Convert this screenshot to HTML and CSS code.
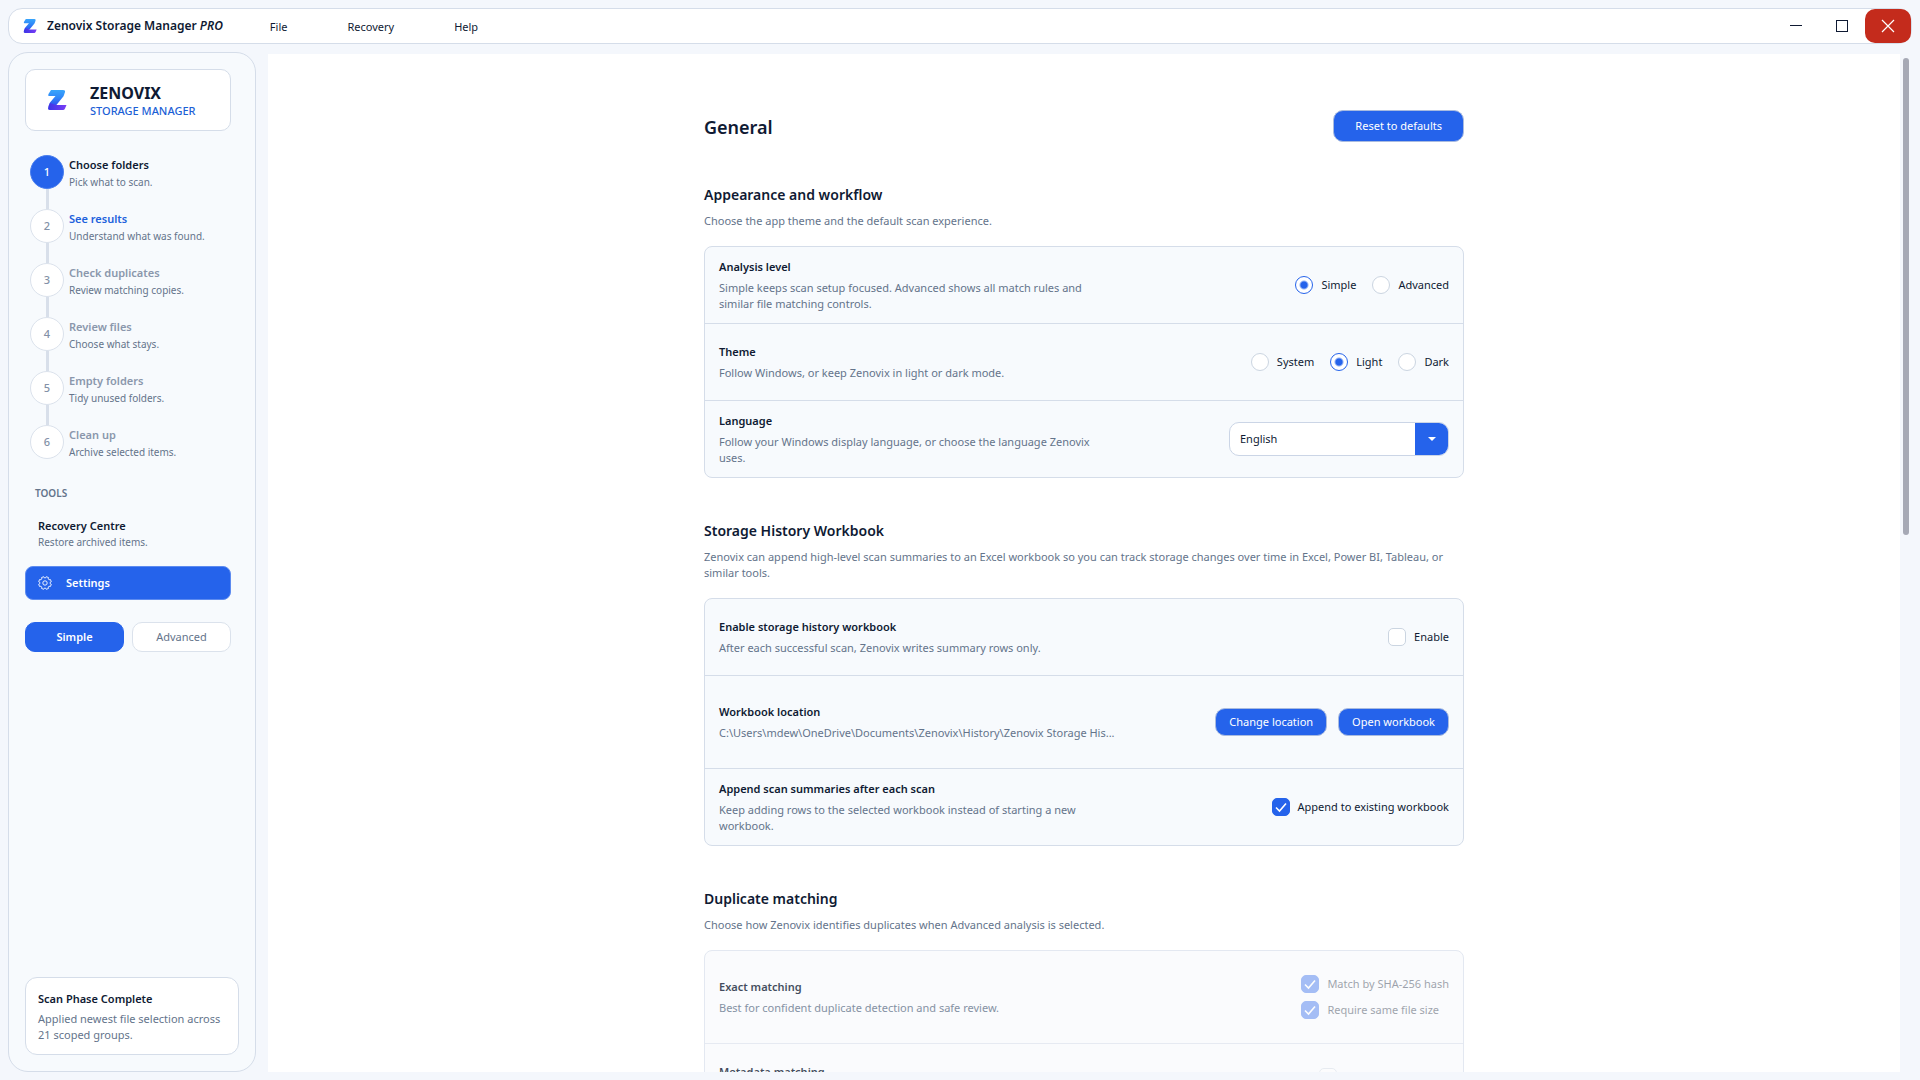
FILE: index.html
```html
<!DOCTYPE html>
<html lang="en">
<head>
<meta charset="utf-8">
<meta name="viewport" content="width=device-width, initial-scale=1">
<title>Zenovix Storage Manager PRO</title>
<link rel="stylesheet" href="styles.css">
</head>
<body>
<svg class="defs" width="0" height="0" aria-hidden="true">
  <defs>
    <linearGradient id="z-top" x1="0" y1="0" x2="0" y2="1">
      <stop offset="0" stop-color="#38a5fb"/>
      <stop offset="0.5" stop-color="#2f86f8"/>
      <stop offset="1" stop-color="#2f4ff0"/>
    </linearGradient>
    <linearGradient id="z-base" x1="0" y1="0" x2="1" y2="0">
      <stop offset="0" stop-color="#3a35e6"/>
      <stop offset="1" stop-color="#7a3cf5"/>
    </linearGradient>
    <symbol id="z-logo" viewBox="0 0 20 20">
      <path d="M4 0H16Q18.500 0 18 2L17 5Q16.500 6.500 15.500 7.500L9 15.500H3Q1.500 14.500 3 12.500L8.500 6H2Q0.500 6 1.500 4Z" fill="url(#z-top)"/>
      <path d="M3 13L9 15H19.500L18 18.500Q17.300 20 16 20H3Q1 20 1 18.500Q1 16 3 13Z" fill="url(#z-base)"/>
    </symbol>
  </defs>
</svg>
<div class="app">
  <header class="titlebar">
    <svg class="titlebar-logo" aria-hidden="true"><use href="#z-logo"/></svg>
    <div class="titlebar-name">Zenovix Storage Manager <em>PRO</em></div>
    <nav class="menu" aria-label="Main menu">
      <button class="menu-item" type="button">File</button>
      <button class="menu-item" type="button">Recovery</button>
      <button class="menu-item" type="button">Help</button>
    </nav>
    <div class="window-buttons">
      <button class="window-button" type="button" aria-label="Minimise">
        <svg width="14" height="14" viewBox="0 0 14 14"><path d="M1 6.500H13" stroke="currentColor"/></svg>
      </button>
      <button class="window-button" type="button" aria-label="Maximise">
        <svg width="14" height="14" viewBox="0 0 14 14"><rect x="1.500" y="1.500" width="11" height="11" fill="none" stroke="currentColor"/></svg>
      </button>
      <button class="window-button close" type="button" aria-label="Close">
        <svg width="14" height="14" viewBox="0 0 14 14"><path d="M1 1L13 13M13 1L1 13" stroke="currentColor" stroke-width="1.200"/></svg>
      </button>
    </div>
  </header>

  <div class="body">
    <aside class="sidebar">
      <div class="brand">
        <svg class="brand-logo" aria-hidden="true"><use href="#z-logo"/></svg>
        <div class="brand-text">
          <div class="brand-name">ZENOVIX</div>
          <div class="brand-sub">STORAGE MANAGER</div>
        </div>
      </div>

      <ol class="steps">
        <li class="step active"><span class="step-dot">1</span><div class="step-text"><div class="step-title">Choose folders</div><div class="step-sub">Pick what to scan.</div></div></li>
        <li class="step next"><span class="step-dot">2</span><div class="step-text"><div class="step-title">See results</div><div class="step-sub">Understand what was found.</div></div></li>
        <li class="step"><span class="step-dot">3</span><div class="step-text"><div class="step-title">Check duplicates</div><div class="step-sub">Review matching copies.</div></div></li>
        <li class="step"><span class="step-dot">4</span><div class="step-text"><div class="step-title">Review files</div><div class="step-sub">Choose what stays.</div></div></li>
        <li class="step"><span class="step-dot">5</span><div class="step-text"><div class="step-title">Empty folders</div><div class="step-sub">Tidy unused folders.</div></div></li>
        <li class="step"><span class="step-dot">6</span><div class="step-text"><div class="step-title">Clean up</div><div class="step-sub">Archive selected items.</div></div></li>
      </ol>

      <div class="tools-label">TOOLS</div>
      <a class="tool" href="#recovery">
        <span class="tool-title">Recovery Centre</span>
        <span class="tool-sub">Restore archived items.</span>
      </a>
      <a class="tool-current" href="#settings" aria-current="page">
        <svg width="14" height="14" viewBox="0 0 14 14" fill="none" stroke="currentColor" stroke-width="0.900" aria-hidden="true">
          <path d="M5.700 0.700L6.300 1.800H7.700L8.300 0.700L10.500 1.600L10.200 2.900L11.100 3.800L12.400 3.500L13.300 5.700L12.200 6.300V7.700L13.300 8.300L12.400 10.500L11.100 10.200L10.200 11.100L10.500 12.400L8.300 13.300L7.700 12.200H6.300L5.700 13.300L3.500 12.400L3.800 11.100L2.900 10.200L1.600 10.500L0.700 8.300L1.800 7.700V6.300L0.700 5.700L1.600 3.500L2.900 3.800L3.800 2.900L3.500 1.600Z" stroke-linejoin="round"/>
          <circle cx="7" cy="7" r="2.200"/>
        </svg>
        <span>Settings</span>
      </a>
      <div class="mode">
        <button class="mode-button selected" type="button" aria-pressed="true">Simple</button>
        <button class="mode-button" type="button" aria-pressed="false">Advanced</button>
      </div>

      <div class="status">
        <div class="status-title">Scan Phase Complete</div>
        <p class="status-text">Applied newest file selection across 21 scoped groups.</p>
      </div>
    </aside>

    <main class="page">
      <div class="content">
        <div class="page-head">
          <h1>General</h1>
          <button class="button reset" type="button">Reset to defaults</button>
        </div>

        <section class="section">
          <h2>Appearance and workflow</h2>
          <p class="muted">Choose the app theme and the default scan experience.</p>
          <div class="card">
            <div class="row">
              <div class="copy">
                <h3>Analysis level</h3>
                <p class="muted">Simple keeps scan setup focused. Advanced shows all match rules and similar file matching controls.</p>
              </div>
              <div class="controls">
                <label class="choice"><input type="radio" name="level" checked>Simple</label>
                <label class="choice"><input type="radio" name="level">Advanced</label>
              </div>
            </div>
            <div class="row">
              <div class="copy">
                <h3>Theme</h3>
                <p class="muted">Follow Windows, or keep Zenovix in light or dark mode.</p>
              </div>
              <div class="controls">
                <label class="choice"><input type="radio" name="theme">System</label>
                <label class="choice"><input type="radio" name="theme" checked>Light</label>
                <label class="choice"><input type="radio" name="theme">Dark</label>
              </div>
            </div>
            <div class="row">
              <div class="copy">
                <h3><label for="language">Language</label></h3>
                <p class="muted">Follow your Windows display language, or choose the language Zenovix uses.</p>
              </div>
              <div class="select">
                <select id="language"><option>English</option></select>
                <span class="select-arrow" aria-hidden="true"><svg width="8" height="4" viewBox="0 0 8 4"><path d="M0 0H8L4 4Z" fill="#fff"/></svg></span>
              </div>
            </div>
          </div>
        </section>

        <section class="section">
          <h2>Storage History Workbook</h2>
          <p class="muted">Zenovix can append high-level scan summaries to an Excel workbook so you can track storage changes over time in Excel, Power BI, Tableau, or similar tools.</p>
          <div class="card">
            <div class="row">
              <div class="copy">
                <h3>Enable storage history workbook</h3>
                <p class="muted">After each successful scan, Zenovix writes summary rows only.</p>
              </div>
              <div class="controls">
                <label class="choice"><input type="checkbox">Enable</label>
              </div>
            </div>
            <div class="row tall">
              <div class="copy">
                <h3>Workbook location</h3>
                <p class="muted path">C:\Users\mdew\OneDrive\Documents\Zenovix\History\Zenovix Storage His...</p>
              </div>
              <div class="controls actions">
                <button class="button" type="button">Change location</button>
                <button class="button" type="button">Open workbook</button>
              </div>
            </div>
            <div class="row">
              <div class="copy">
                <h3>Append scan summaries after each scan</h3>
                <p class="muted">Keep adding rows to the selected workbook instead of starting a new workbook.</p>
              </div>
              <div class="controls">
                <label class="choice"><input type="checkbox" checked>Append to existing workbook</label>
              </div>
            </div>
          </div>
        </section>

        <section class="section">
          <h2>Duplicate matching</h2>
          <p class="muted">Choose how Zenovix identifies duplicates when Advanced analysis is selected.</p>
          <div class="card disabled">
            <div class="row tall">
              <div class="copy">
                <h3>Exact matching</h3>
                <p class="muted">Best for confident duplicate detection and safe review.</p>
              </div>
              <div class="controls stacked">
                <label class="choice"><input type="checkbox" checked disabled>Match by SHA-256 hash</label>
                <label class="choice"><input type="checkbox" checked disabled>Require same file size</label>
              </div>
            </div>
            <div class="row">
              <div class="copy">
                <h3>Metadata matching</h3>
              </div>
              <div class="controls metadata">
                <input type="checkbox" aria-label="Metadata matching" disabled>
              </div>
            </div>
          </div>
        </section>
      </div>
    </main>
    <div class="scrollbar" aria-hidden="true"><div class="scrollbar-thumb"></div></div>
  </div>
</div>
</body>
</html>
```
FILE: styles.css
```css
:root {
  --ink: #0f1a33;
  --muted: #64748b;
  --line: #d5dde9;
  --blue: #2563eb;
  --panel: #f7fafd;
}

* { box-sizing: border-box; }

body {
  margin: 0;
  background: #f4f7fc;
  color: var(--ink);
  font: 11px/16px "Noto Sans", "Open Sans", sans-serif;
}

h1, h2, h3, p, ol { margin: 0; padding: 0; font-weight: 400; }
button, select { font: inherit; color: inherit; }
.defs { position: absolute; }

.app {
  display: flex;
  flex-direction: column;
  gap: 8px;
  height: 100vh;
  padding: 8px;
}

/* Title bar */
.titlebar {
  display: flex;
  align-items: center;
  flex: none;
  height: 36px;
  padding-left: 14px;
  background: #fff;
  border: 1px solid var(--line);
  border-radius: 14px;
}
.titlebar-logo { width: 14px; height: 14px; }
.titlebar-name { margin-left: 10px; font-size: 12px; font-weight: 600; }
.menu { display: flex; gap: 40px; margin-left: 37px; }
.menu-item { padding: 5px 10px 3px; border: 0; background: none; }
.window-buttons { display: flex; height: 100%; margin-left: auto; }
.window-button {
  display: grid;
  place-items: center;
  width: 46px;
  padding: 0;
  border: 0;
  border-radius: 10px;
  background: none;
}
.window-button.close { background: #c42b1c; color: #fff; }

.body {
  display: grid;
  grid-template-columns: 248px minmax(0, 1fr) 12px;
  flex: 1;
  min-height: 0;
}

/* Sidebar */
.sidebar {
  display: flex;
  flex-direction: column;
  padding: 16px;
  background: var(--panel);
  border: 1px solid var(--line);
  border-radius: 20px;
}
.brand {
  display: flex;
  align-items: center;
  gap: 23px;
  height: 62px;
  margin-right: 8px;
  padding-left: 21px;
  background: #fff;
  border: 1px solid var(--line);
  border-radius: 10px;
}
.brand-logo { width: 20px; height: 20px; }
.brand-text { padding-top: 2px; }
.brand-name { font-size: 16px; line-height: 20px; font-weight: 700; }
.brand-sub { color: #1d5fd6; font-weight: 500; }

.steps { margin-top: 24px; list-style: none; }
.step {
  position: relative;
  display: flex;
  align-items: center;
  gap: 5px;
  height: 54px;
  padding: 0 0 20px 5px;
}
.step:last-child { height: 34px; padding-bottom: 0; }
.step:not(:last-child)::after {
  content: "";
  position: absolute;
  top: 34px;
  left: 21px;
  width: 3px;
  height: 20px;
  background: #d8dfea;
}
.step-dot {
  display: grid;
  place-items: center;
  width: 34px;
  height: 34px;
  border: 1px solid #dbe2ec;
  border-radius: 50%;
  background: #fff;
  color: #8391a7;
  font-weight: 500;
}
.step-text { padding-top: 2px; }
.step-title { line-height: 18px; font-weight: 600; color: #8a97ac; }
.step-sub, .tool-sub { font-size: 10px; color: var(--muted); }
.step.active .step-dot { background: var(--blue); border-color: #4b7fee; color: #fff; }
.step.active .step-title { color: var(--ink); }
.step.next .step-title { color: #2161dc; }

.tools-label { margin: 26px 0 0 10px; color: var(--muted); font-size: 10px; font-weight: 600; }
.tool {
  display: flex;
  flex-direction: column;
  margin: 17px 0 0 13px;
  color: inherit;
  text-decoration: none;
}
.tool-title { font-weight: 600; }
.tool-current {
  display: flex;
  align-items: center;
  gap: 14px;
  height: 34px;
  margin: 16px 8px 0 0;
  padding-left: 12px;
  border: 1px solid #5d8bf0;
  border-radius: 8px;
  background: var(--blue);
  color: #fff;
  font-weight: 600;
  text-decoration: none;
}
.mode { display: flex; gap: 8px; margin: 22px 8px 0 0; }
.mode-button {
  flex: 1;
  height: 30px;
  padding: 0;
  border: 1px solid #dbe2ec;
  border-radius: 10px;
  background: #fff;
  color: var(--muted);
}
.mode-button.selected {
  background: var(--blue);
  border-color: var(--blue);
  color: #fff;
  font-weight: 600;
}
.status {
  margin-top: auto;
  padding: 13px 12px 11px;
  background: #fff;
  border: 1px solid var(--line);
  border-radius: 12px;
}
.status-title { font-weight: 600; }
.status-text { margin-top: 4px; color: var(--muted); }

/* Settings page */
.page {
  margin: 2px 0 0 12px;
  background: #fff;
  overflow: hidden;
}
.content { width: 100%; max-width: 760px; margin: 0 auto; padding-top: 56px; }
.page-head { display: flex; align-items: center; justify-content: space-between; height: 32px; }
h1 { padding-top: 2px; font-size: 18px; line-height: 24px; font-weight: 600; }
h2 { font-size: 14px; line-height: 22px; font-weight: 600; }
h3 { font-size: 11px; line-height: 16px; font-weight: 600; }
.muted { color: var(--muted); }
.section { margin-top: 42px; }
.section > .muted { margin-top: 7px; }

.card {
  margin-top: 17px;
  background: var(--panel);
  border: 1px solid var(--line);
  border-radius: 8px;
}
.row {
  display: flex;
  align-items: center;
  justify-content: space-between;
  min-height: 77px;
  padding: 11px 14px;
  border-bottom: 1px solid var(--line);
}
.row.tall { min-height: 93px; }
.row:last-child { min-height: 76px; border-bottom: 0; }
.copy { max-width: 408px; min-height: 37px; }
.copy .muted { max-width: 400px; margin-top: 5px; }
.copy .path { max-width: none; white-space: nowrap; }

.controls { display: flex; gap: 16px; }
.controls.actions { gap: 11px; }
.controls.stacked { flex-direction: column; gap: 8px; }
.controls.metadata { width: 130px; height: 28px; }
.choice { display: flex; align-items: center; gap: 8px; height: 18px; }

input[type="radio"], input[type="checkbox"] {
  flex: none;
  appearance: none;
  width: 18px;
  height: 18px;
  margin: 0;
  border: 1px solid #cbd5e1;
  background: #fff;
}
input[type="radio"] { border-radius: 50%; }
input[type="radio"]:checked {
  border-color: var(--blue);
  background: radial-gradient(circle, var(--blue) 3px, #fff 5px);
}
input[type="checkbox"] { border-radius: 5px; }
input[type="checkbox"]:checked {
  border-color: var(--blue);
  background: var(--blue) url("data:image/svg+xml,%3Csvg xmlns='http://www.w3.org/2000/svg' viewBox='0 0 16 16'%3E%3Cpath d='M3 8.500L6.500 12L13 4.500' fill='none' stroke='%23fff' stroke-width='1.600'/%3E%3C/svg%3E");
}

.button {
  height: 28px;
  padding: 0 14px;
  border: 1px solid #a9bbdf;
  border-radius: 10px;
  background: var(--blue);
  color: #fff;
}
.actions .button { padding: 0 13px; }
.button.reset { height: 32px; padding: 0 21px; }

.select {
  display: flex;
  position: relative;
  width: 220px;
  height: 34px;
  border: 1px solid #cbd5e6;
  border-radius: 10px;
  background: #fff;
  overflow: hidden;
}
.select select {
  appearance: none;
  flex: 1;
  padding: 0 44px 0 10px;
  border: 0;
  background: none;
}
.select-arrow {
  position: absolute;
  inset: 0 0 0 auto;
  display: grid;
  place-items: center;
  width: 33px;
  background: var(--blue);
  pointer-events: none;
}

.card.disabled { background: #fafbfd; border-color: #e3e8f1; }
.disabled .row { border-color: #e6eaf2; }
.disabled .copy { opacity: .78; }
.disabled .controls { opacity: .4; }

/* Scroll indicator */
.scrollbar { padding: 6px 3px 0; }
.scrollbar-thumb { width: 6px; height: 47%; border-radius: 3px; background: #a6a9b5; }
```
